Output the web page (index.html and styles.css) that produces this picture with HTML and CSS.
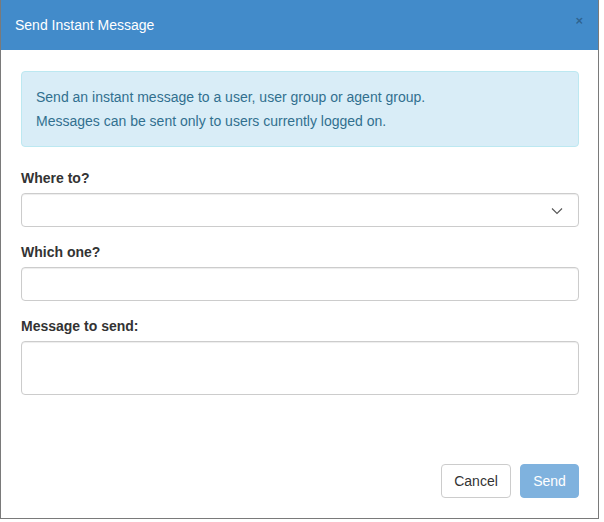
FILE: index.html
```html
<!DOCTYPE html>
<html>
<head>
<meta charset="utf-8">
<link rel="stylesheet" href="styles.css">
</head>
<body>
<div class="modal">
  <div class="modal-header">
    <span class="modal-title">Send Instant Message</span>
    <span class="close">×</span>
  </div>
  <div class="modal-body">
    <div class="alert">
      <div class="alert-line">Send an instant message to a user, user group or agent group.</div>
      <div class="alert-line">Messages can be sent only to users currently logged on.</div>
    </div>
    <div class="field">
      <label class="label">Where to?</label>
      <div class="control select">
        <svg class="chevron" width="12" height="8" viewBox="0 0 12 8"><path d="M1 1.5 L6 6.5 L11 1.5" fill="none" stroke="#555" stroke-width="1.1"/></svg>
      </div>
    </div>
    <div class="field">
      <label class="label">Which one?</label>
      <div class="control"></div>
    </div>
    <div class="field">
      <label class="label">Message to send:</label>
      <div class="control textarea"></div>
    </div>
  </div>
  <div class="modal-footer">
    <button class="btn btn-default">Cancel</button>
    <button class="btn btn-primary">Send</button>
  </div>
</div>
</body>
</html>
```
FILE: styles.css
```css
html, body {
  margin: 0;
  padding: 0;
}
body {
  background: #ffffff;
  font-family: "Liberation Sans", Arial, sans-serif;
  font-size: 14px;
  color: #333;
}
.modal {
  width: 597px;
  height: 518px;
  border: 1px solid #7a7a7a;
  border-top: none;
  background: #fff;
  display: flex;
  flex-direction: column;
}
.modal-header {
  height: 50px;
  background: #428bca;
  display: flex;
  align-items: center;
  justify-content: space-between;
  padding: 0 15px 0 14px;
  flex-shrink: 0;
}
.modal-title {
  color: #fff;
  font-size: 14px;
  margin-top: -1px;
}
.close {
  color: rgba(0, 0, 0, 0.3);
  font-size: 13px;
  font-weight: bold;
  margin-top: -10px;
}
.modal-body {
  padding: 21px 19px 0 20px;
  flex: 1;
}
.alert {
  background: #d9edf7;
  border: 1px solid #bce8f1;
  border-radius: 4px;
  color: #31708f;
  padding: 15px 14px;
  display: flex;
  flex-direction: column;
  gap: 4px;
  margin-bottom: 21px;
}
.alert-line {
  line-height: 20px;
}
.field {
  display: flex;
  flex-direction: column;
  gap: 5px;
  margin-bottom: 15px;
}
.label {
  font-weight: bold;
  line-height: 20px;
  color: #333;
}
.control {
  height: 32px;
  border: 1px solid #ccc;
  border-radius: 4px;
  box-shadow: inset 0 1px 1px rgba(0, 0, 0, 0.075);
  background: #fff;
  display: flex;
  align-items: center;
  justify-content: flex-end;
}
.select {
  padding-right: 15px;
}
.chevron {
  display: block;
  margin-top: 1px;
}
.textarea {
  height: 52px;
}
.modal-footer {
  display: flex;
  justify-content: flex-end;
  gap: 9px;
  padding: 0 19px 20px 0;
}
.btn {
  height: 34px;
  border-radius: 4px;
  font-family: "Liberation Sans", Arial, sans-serif;
  font-size: 14px;
  padding: 0 12px;
  border: 1px solid #ccc;
  cursor: pointer;
}
.btn-default {
  background: #fff;
  color: #333;
  width: 70px;
}
.btn-primary {
  background: #7fb2de;
  border-color: #7fb2de;
  color: #fff;
  width: 59px;
}
```
